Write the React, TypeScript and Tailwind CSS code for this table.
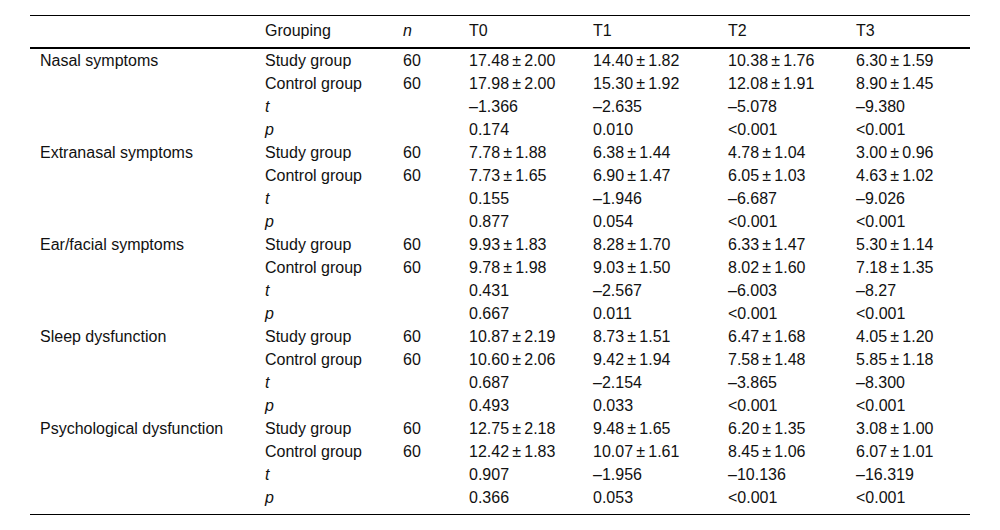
import React from 'react';

type Row = { label?: string; group: string; italic?: boolean; n?: string; vals: string[] };

const pm = (a: string, b: string) => `${a}\u2009±\u2009${b}`;

const sections: { label: string; rows: string[][] }[] = [
  {
    label: 'Nasal symptoms',
    rows: [
      [pm('17.48', '2.00'), pm('14.40', '1.82'), pm('10.38', '1.76'), pm('6.30', '1.59')],
      [pm('17.98', '2.00'), pm('15.30', '1.92'), pm('12.08', '1.91'), pm('8.90', '1.45')],
      ['–1.366', '–2.635', '–5.078', '–9.380'],
      ['0.174', '0.010', '<0.001', '<0.001'],
    ],
  },
  {
    label: 'Extranasal symptoms',
    rows: [
      [pm('7.78', '1.88'), pm('6.38', '1.44'), pm('4.78', '1.04'), pm('3.00', '0.96')],
      [pm('7.73', '1.65'), pm('6.90', '1.47'), pm('6.05', '1.03'), pm('4.63', '1.02')],
      ['0.155', '–1.946', '–6.687', '–9.026'],
      ['0.877', '0.054', '<0.001', '<0.001'],
    ],
  },
  {
    label: 'Ear/facial symptoms',
    rows: [
      [pm('9.93', '1.83'), pm('8.28', '1.70'), pm('6.33', '1.47'), pm('5.30', '1.14')],
      [pm('9.78', '1.98'), pm('9.03', '1.50'), pm('8.02', '1.60'), pm('7.18', '1.35')],
      ['0.431', '–2.567', '–6.003', '–8.27'],
      ['0.667', '0.011', '<0.001', '<0.001'],
    ],
  },
  {
    label: 'Sleep dysfunction',
    rows: [
      [pm('10.87', '2.19'), pm('8.73', '1.51'), pm('6.47', '1.68'), pm('4.05', '1.20')],
      [pm('10.60', '2.06'), pm('9.42', '1.94'), pm('7.58', '1.48'), pm('5.85', '1.18')],
      ['0.687', '–2.154', '–3.865', '–8.300'],
      ['0.493', '0.033', '<0.001', '<0.001'],
    ],
  },
  {
    label: 'Psychological dysfunction',
    rows: [
      [pm('12.75', '2.18'), pm('9.48', '1.65'), pm('6.20', '1.35'), pm('3.08', '1.00')],
      [pm('12.42', '1.83'), pm('10.07', '1.61'), pm('8.45', '1.06'), pm('6.07', '1.01')],
      ['0.907', '–1.956', '–10.136', '–16.319'],
      ['0.366', '0.053', '<0.001', '<0.001'],
    ],
  },
];

function buildRows(): Row[] {
  const out: Row[] = [];
  sections.forEach((s) => {
    out.push({ label: s.label, group: 'Study group', n: '60', vals: s.rows[0] });
    out.push({ group: 'Control group', n: '60', vals: s.rows[1] });
    out.push({ group: 't', italic: true, vals: s.rows[2] });
    out.push({ group: 'p', italic: true, vals: s.rows[3] });
  });
  return out;
}

export default function App() {
  const rows = buildRows();
  return (
    <div className="w-[1000px] h-[530px] bg-white pt-[15px] pl-[30px] text-[16px] text-[#111] font-['Liberation_Sans',Arial,sans-serif]">
      <table className="table-fixed w-[940px] border-collapse border-t border-b border-black">
        <thead>
          <tr className="h-[32px] border-b-2 border-black">
            <th className="w-[225px] pl-[10px] text-left font-normal"></th>
            <th className="w-[138px] pl-[10px] text-left font-normal">Grouping</th>
            <th className="w-[66px] pl-[10px] text-left font-normal italic">n</th>
            <th className="w-[124px] pl-[10px] text-left font-normal">T0</th>
            <th className="w-[135px] pl-[10px] text-left font-normal">T1</th>
            <th className="w-[128px] pl-[10px] text-left font-normal">T2</th>
            <th className="w-[124px] pl-[10px] text-left font-normal">T3</th>
          </tr>
        </thead>
        <tbody>
          {rows.map((r, i) => (
            <tr key={i} className={i === rows.length - 1 ? 'h-[29px] align-top' : 'h-[23px]'}>
              <td className="pl-[10px] whitespace-nowrap leading-[23px]">{r.label ?? ''}</td>
              <td className={`pl-[10px] whitespace-nowrap leading-[23px] ${r.italic ? 'italic' : ''}`}>{r.group}</td>
              <td className="pl-[10px] leading-[23px]">{r.n ?? ''}</td>
              {r.vals.map((v, j) => (
                <td key={j} className="pl-[10px] whitespace-nowrap leading-[23px]">
                  {v}
                </td>
              ))}
            </tr>
          ))}
        </tbody>
      </table>
    </div>
  );
}
